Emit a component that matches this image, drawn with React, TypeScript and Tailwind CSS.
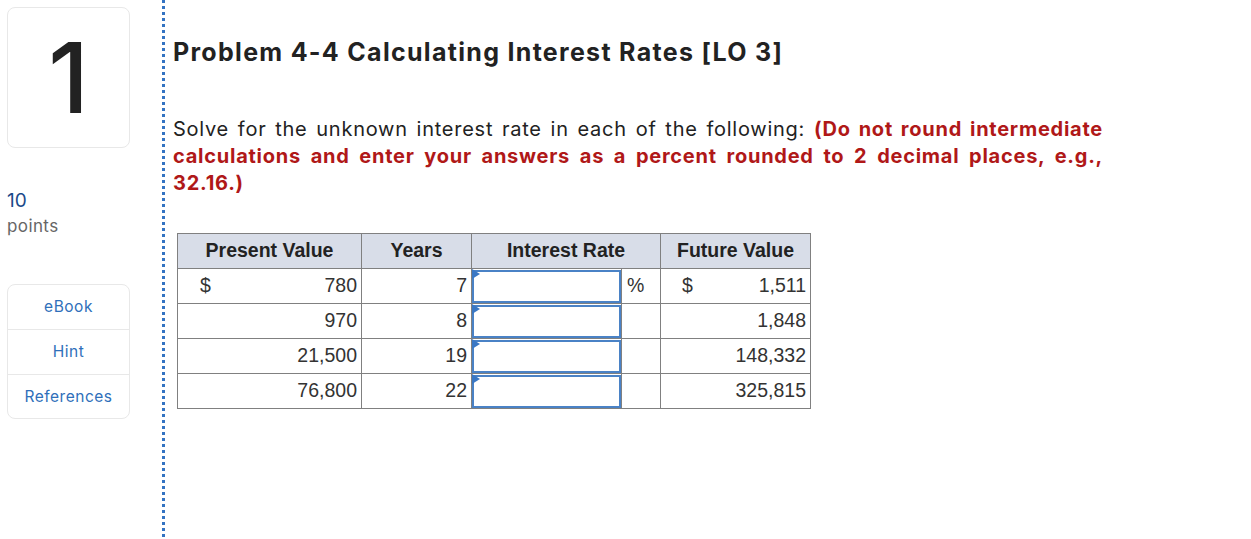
import React from "react";

const rows = [
  { pv: "780", y: "7", fv: "1,511", first: true },
  { pv: "970", y: "8", fv: "1,848" },
  { pv: "21,500", y: "19", fv: "148,332" },
  { pv: "76,800", y: "22", fv: "325,815" },
];

export default function App() {
  return (
    <div className="flex h-[539px] w-[1251px] bg-white overflow-hidden" style={{ fontFamily: "Inter, 'Open Sans', sans-serif" }}>
      {/* sidebar */}
      <div className="w-[162px] shrink-0 pl-[7px] pt-[7px] flex flex-col">
        <div className="w-[123px] h-[141px] rounded-[8px] border border-[#e8e8e8] flex items-center justify-center">
          <span className="text-[98px] leading-none text-[#222] font-medium">1</span>
        </div>
        <div className="mt-[42px] text-[19px] leading-[22px] text-[#1b4a8a]">10</div>
        <div className="mt-[3px] text-[17px] leading-[22px] tracking-[0.4px] text-[#666]">points</div>
        <div className="mt-[47px] w-[123px] rounded-[8px] border border-[#e8e8e8] flex flex-col text-[15.5px] tracking-[0.5px] text-[#2f6fba]">
          <div className="h-[45px] flex items-center justify-center border-b border-[#e8e8e8]">eBook</div>
          <div className="h-[45px] flex items-center justify-center border-b border-[#e8e8e8]">Hint</div>
          <div className="h-[43px] flex items-center justify-center">References</div>
        </div>
      </div>
      {/* dotted divider */}
      <div className="w-[3px] shrink-0 h-full bg-[linear-gradient(to_bottom,#3373c2_50%,transparent_50%)] bg-[length:3px_6px]" />
      {/* content */}
      <div className="pl-[8px] pt-[36px] flex flex-col items-start">
        <h1 className="text-[25px] leading-[32px] font-bold tracking-[1.3px] text-[#222]">Problem 4-4 Calculating Interest Rates [LO 3]</h1>
        <p className="mt-[48px] w-[930px] text-[20px] leading-[27px] tracking-[0.75px] text-[#222] text-justify">
          Solve for the unknown interest rate in each of the following:{" "}
          <span className="font-bold text-[#b01818]">
            (Do not round intermediate calculations and enter your answers as a percent rounded to 2 decimal places, e.g., 32.16.)
          </span>
        </p>
        <table
          className="mt-[36px] ml-[4px] w-[633px] table-fixed border-collapse text-[19.5px] text-[#333]"
          style={{ fontFamily: "'Liberation Sans', Arial, sans-serif" }}
        >
          <colgroup>
            <col className="w-[184px]" />
            <col className="w-[110px]" />
            <col className="w-[150px]" />
            <col className="w-[39px]" />
            <col className="w-[150px]" />
          </colgroup>
          <thead>
            <tr className="h-[35px] bg-[#d8dde8]">
              <th className="border border-[#808080] font-bold text-[#222] text-center p-0">Present Value</th>
              <th className="border border-[#808080] font-bold text-[#222] text-center p-0">Years</th>
              <th colSpan={2} className="border border-[#808080] font-bold text-[#222] text-center p-0">Interest Rate</th>
              <th className="border border-[#808080] font-bold text-[#222] text-center p-0">Future Value</th>
            </tr>
          </thead>
          <tbody>
            {rows.map((r, i) => (
              <tr key={i} className="h-[35px]">
                <td className="border border-[#808080] p-0">
                  <div className="flex justify-between pl-[22px] pr-[4px]">
                    <span>{r.first ? "$" : ""}</span>
                    <span>{r.pv}</span>
                  </div>
                </td>
                <td className="border border-[#808080] p-0 text-right pr-[4px]">{r.y}</td>
                <td className="border border-[#808080] p-0 relative">
                  <div className="h-[33px] w-[149px] border-2 border-[#4a82c6] bg-white" />
                  <div className="absolute left-0 top-0 w-0 h-0 border-t-[5px] border-b-[5px] border-l-[8px] border-t-transparent border-b-transparent border-l-[#3b78c4]" />
                </td>
                <td className="border border-[#808080] p-0 pl-[5px] text-left">{r.first ? "%" : ""}</td>
                <td className="border border-[#808080] p-0">
                  <div className="flex justify-between pl-[21px] pr-[4px]">
                    <span>{r.first ? "$" : ""}</span>
                    <span>{r.fv}</span>
                  </div>
                </td>
              </tr>
            ))}
          </tbody>
        </table>
      </div>
    </div>
  );
}
